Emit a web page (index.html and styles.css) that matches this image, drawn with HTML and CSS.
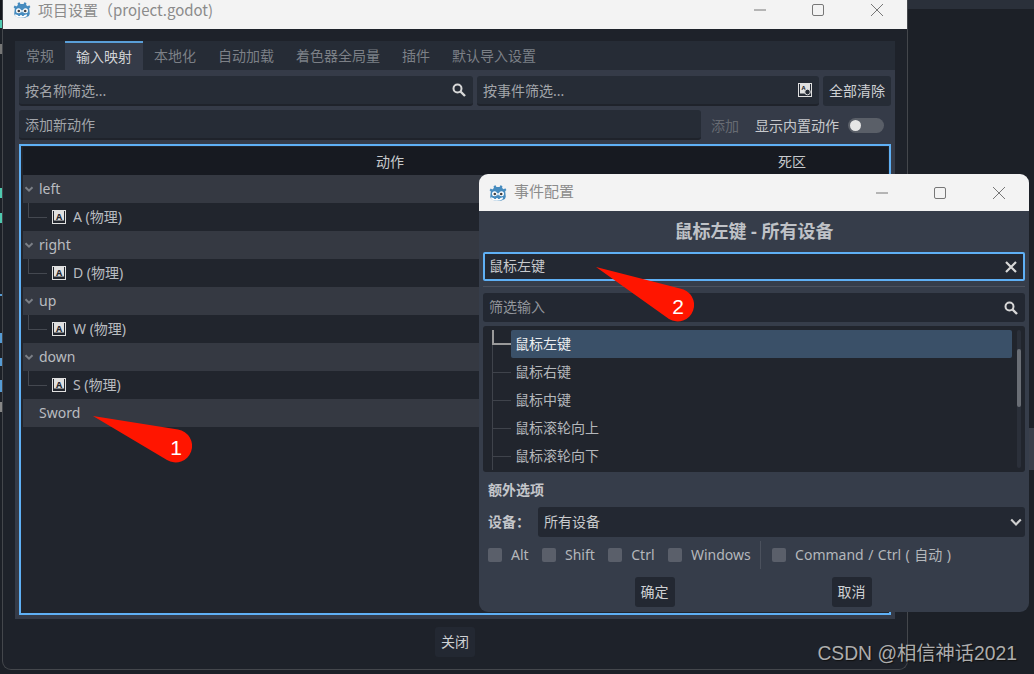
FILE: index.html
```html
<!DOCTYPE html>
<html lang="zh">
<head>
<meta charset="UTF-8">
<title>项目设置</title>
<link rel="stylesheet" href="styles.css">
</head>
<body>
<svg class="defs" width="0" height="0">
	<symbol id="godot" viewBox="0 0 18 18">
		<path fill="#478cbf" d="M6.6 1.2 7.4 3h3.2l.8-1.8 2 .7-.3 2 1.6 1.3 1.6-.9 1.1 1.8-1.2 1.2.6 5.4-.9 2.4q-3 2-6.9 2t-6.9-2L1.200 13l.6-5.400L.6 6.300l1.100-1.800 1.600.9 1.600-1.300-.3-2z"/>
		<path fill="#fff" d="M2 13.300l2.500.7 1 1.100h1.300l.7-1h1l.7 1h1.300l1-1.100 2.500-.7-.3 1.900q-3 1.600-5.700 1.600t-5.700-1.600z"/>
		<circle cx="5.500" cy="9.800" r="2.500" fill="#fff"/>
		<circle cx="12.500" cy="9.800" r="2.500" fill="#fff"/>
		<circle cx="5.800" cy="10" r="1.300" fill="#414042"/>
		<circle cx="12.200" cy="10" r="1.300" fill="#414042"/>
		<rect x="8.300" y="9" width="1.400" height="2.200" fill="#fff"/>
	</symbol>
	<symbol id="key" viewBox="0 0 14 14">
		<rect x=".5" y=".5" width="13" height="13" fill="none" stroke="#e0e0e0"/>
		<rect x="2" y="1" width="10" height="9.500" fill="#e0e0e0"/>
	</symbol>
	<symbol id="search" viewBox="0 0 14 14">
		<circle cx="5.500" cy="5.500" r="4" fill="none" stroke="#d8d8d8" stroke-width="2"/>
		<path d="M8.500 8.500 13 13" stroke="#d8d8d8" stroke-width="2.400"/>
	</symbol>
	<symbol id="min" viewBox="0 0 14 14"><path d="M1 7h12" stroke="#777" fill="none"/></symbol>
	<symbol id="max" viewBox="0 0 14 14"><rect x="1.500" y="1.500" width="11" height="11" rx="1.500" stroke="#777" fill="none"/></symbol>
	<symbol id="close" viewBox="0 0 14 14"><path d="M1 1l12 12M13 1 1 13" stroke="#777" fill="none"/></symbol>
	<symbol id="chev" viewBox="0 0 10 10"><path d="M1.500 3.200 5 6.700l3.500-3.500" stroke="#7b7f86" stroke-width="2" fill="none"/></symbol>
</svg>

<div class="desktop">
	<div class="edge"></div>
	<div class="topbar"></div>
	<div class="sideblock"></div>

	<!-- 项目设置 -->
	<div class="win main-win">
		<div class="titlebar main-title">
			<svg class="logo"><use href="#godot"/></svg>
			<span class="title-text">项目设置（project.godot)</span>
			<div class="ctrls">
				<div class="ctrl"><svg><use href="#min"/></svg></div>
				<div class="ctrl"><svg><use href="#max"/></svg></div>
				<div class="ctrl"><svg><use href="#close"/></svg></div>
			</div>
		</div>
		<div class="main-body">
			<div class="panel">
				<div class="tabs">
					<div class="tab">常规</div>
					<div class="tab on">输入映射</div>
					<div class="tab">本地化</div>
					<div class="tab">自动加载</div>
					<div class="tab">着色器全局量</div>
					<div class="tab">插件</div>
					<div class="tab">默认导入设置</div>
				</div>
				<div class="page">
					<div class="line">
						<div class="ipt w-name"><span>按名称筛选...</span><svg class="ico"><use href="#search"/></svg></div>
						<div class="ipt w-event">
							<span>按事件筛选...</span>
							<svg class="ico" viewBox="0 0 14 14">
								<use href="#key"/>
								<text x="5.500" y="6.500" class="key-s">A</text>
								<circle cx="9.500" cy="9" r="2.800" fill="#262c36" stroke="#e0e0e0"/>
							</svg>
						</div>
						<div class="btn">全部清除</div>
					</div>
					<div class="line">
						<div class="ipt w-add"><span>添加新动作</span></div>
						<div class="add-txt">添加</div>
						<div class="builtin">显示内置动作</div>
						<div class="toggle"><i></i></div>
					</div>
					<div class="tree">
						<div class="tree-head"><span>动作</span><span>死区</span><span></span></div>
						<div class="row act"><svg class="chev"><use href="#chev"/></svg><span class="txt">left</span></div>
						<div class="row sub"><div class="branch"></div><svg class="key" viewBox="0 0 14 14"><use href="#key"/><text x="7" y="9.500" class="key-a">A</text></svg><span class="txt">A (物理)</span></div>
						<div class="row act"><svg class="chev"><use href="#chev"/></svg><span class="txt">right</span></div>
						<div class="row sub"><div class="branch"></div><svg class="key" viewBox="0 0 14 14"><use href="#key"/><text x="7" y="9.500" class="key-a">A</text></svg><span class="txt">D (物理)</span></div>
						<div class="row act"><svg class="chev"><use href="#chev"/></svg><span class="txt">up</span></div>
						<div class="row sub"><div class="branch"></div><svg class="key" viewBox="0 0 14 14"><use href="#key"/><text x="7" y="9.500" class="key-a">A</text></svg><span class="txt">W (物理)</span></div>
						<div class="row act"><svg class="chev"><use href="#chev"/></svg><span class="txt">down</span></div>
						<div class="row sub"><div class="branch"></div><svg class="key" viewBox="0 0 14 14"><use href="#key"/><text x="7" y="9.500" class="key-a">A</text></svg><span class="txt">S (物理)</span></div>
						<div class="row act plain"><span class="txt">Sword</span></div>
					</div>
				</div>
			</div>
			<div class="foot"><div class="btn dark">关闭</div></div>
		</div>
	</div>

	<!-- 事件配置 -->
	<div class="win dialog">
		<div class="titlebar">
			<svg class="logo"><use href="#godot"/></svg>
			<span class="title-text">事件配置</span>
			<div class="ctrls">
				<div class="ctrl"><svg><use href="#min"/></svg></div>
				<div class="ctrl"><svg><use href="#max"/></svg></div>
				<div class="ctrl"><svg><use href="#close"/></svg></div>
			</div>
		</div>
		<div class="dlg-body">
			<div class="dlg-head">鼠标左键 - 所有设备</div>
			<div class="ipt focus">
				<span>鼠标左键</span>
				<svg class="ico" viewBox="0 0 14 14"><path d="M2 2l10 10M12 2 2 12" stroke="#d8d8d8" stroke-width="2.200"/></svg>
			</div>
			<div class="sep"></div>
			<div class="ipt filter"><span>筛选输入</span><svg class="ico"><use href="#search"/></svg></div>
			<div class="list">
				<div class="list-rows">
					<div class="item sel"><div class="branch"></div><div class="item-txt">鼠标左键</div></div>
					<div class="item"><div class="branch"></div><div class="item-txt">鼠标右键</div></div>
					<div class="item"><div class="branch"></div><div class="item-txt">鼠标中键</div></div>
					<div class="item"><div class="branch"></div><div class="item-txt">鼠标滚轮向上</div></div>
					<div class="item"><div class="branch"></div><div class="item-txt">鼠标滚轮向下</div></div>
				</div>
				<div class="scroll"><i></i></div>
			</div>
			<div class="extra">额外选项</div>
			<div class="device">
				<b>设备：</b>
				<div class="select"><span>所有设备</span><svg class="sel-arrow" viewBox="0 0 10 10"><path d="M1 3l4 4 4-4" stroke="#d0d0d0" stroke-width="1.800" fill="none"/></svg></div>
			</div>
			<div class="checks">
				<i class="box"></i><span class="lab">Alt</span>
				<i class="box"></i><span class="lab">Shift</span>
				<i class="box"></i><span class="lab">Ctrl</span>
				<i class="box"></i><span class="lab">Windows</span>
				<div class="vsep"></div>
				<i class="box"></i><span class="lab long">Command / Ctrl ( 自动 )</span>
			</div>
			<div class="dlg-btns">
				<div class="btn dark">确定</div>
				<div class="btn dark">取消</div>
			</div>
		</div>
	</div>

	<!-- 标注 -->
	<svg class="callouts" width="1034" height="674" viewBox="0 0 1034 674">
		<path fill="#ff1500" d="M93 416 178 429.600A16.500 16.500 0 1 1 167 460Z"/>
		<text x="176" y="455" class="num">1</text>
		<path fill="#ff1500" d="M596 267 680 288.600A16.500 16.500 0 1 1 669 319Z"/>
		<text x="678" y="314" class="num">2</text>
	</svg>

	<div class="mark">CSDN @相信神话2021</div>
</div>
</body>
</html>
```

FILE: styles.css
```css
*{margin: 0;padding: 0;box-sizing: border-box;}
html, body{width: 100%;height: 100%;overflow: hidden;}
body{background: #1c2027;color: #c8cacd;font: 14px "Noto Sans", "Noto Sans CJK SC", sans-serif;}
i{display: block;font-style: normal;}
.defs{position: absolute;}

/* desktop behind the windows */
.desktop{position: relative;width: 1034px;height: 674px;overflow: hidden;}
.edge{position: absolute;left: 0;top: 0;width: 2px;height: 674px;background: linear-gradient(#14171c 0, #14171c 20px, #4fc9b0 20px, #4fc9b0 28px, transparent 28px, transparent 44px, #777 44px, #777 54px, transparent 54px, transparent 188px, #4fc9b0 188px, #4fc9b0 198px, transparent 198px, transparent 213px, #4fc9b0 213px, #4fc9b0 223px, transparent 223px, transparent 294px, #569cd6 294px, #569cd6 296px, transparent 296px, transparent 333px, #569cd6 333px, #569cd6 343px, transparent 343px, transparent 358px, #569cd6 358px, #569cd6 366px, transparent 366px, transparent 380px, #569cd6 380px, #569cd6 392px, transparent 392px, transparent 402px, #888 402px, #888 412px, transparent 412px);}
.topbar{position: absolute;left: 908px;top: 0;right: 0;height: 9px;background: #2a303a;}
.sideblock{position: absolute;left: 1029px;top: 428px;right: 0;height: 42px;background: #3a3f4a;}

.win{position: absolute;display: flex;flex-direction: column;}
.main-win{left: 2px;top: 0;width: 906px;height: 670px;background: #1e222a;border: 1px solid #44474c;border-top: 0;border-radius: 0 0 9px 9px;overflow: hidden;}
.dialog{left: 479px;top: 174px;width: 550px;height: 438px;background: #363d4a;border-radius: 9px;overflow: hidden;}

.titlebar{display: flex;align-items: center;flex: none;height: 37px;padding-left: 10px;background: #f3f3f3;color: #8b8b8b;font: 15px "Noto Sans CJK SC", sans-serif;}
.main-title{height: 29px;padding-bottom: 9px;}
.logo{width: 18px;height: 18px;margin-right: 7px;flex: none;}
.title-text{margin-top: -4px;}
.main-title .title-text{margin-top: -2px;}
.ctrls{display: flex;margin-left: auto;padding-right: 1px;}
.ctrl{display: flex;justify-content: center;width: 58.5px;}
.ctrl svg{width: 14px;height: 14px;}

.main-body{flex: 1;padding: 12px 12px 0;}
.panel{height: 578px;display: flex;flex-direction: column;background: #353b48;}
.tabs{display: flex;height: 29px;flex: none;background: #262c36;color: #7c8087;}
.tab{padding: 0 11px;line-height: 29px;}
.tab.on{background: #353b48;border-top: 2px solid #5a9fd8;line-height: 27px;color: #d0d2d5;}

.page{flex: 1;display: flex;flex-direction: column;gap: 4px;padding: 6px 4px 4px;}
.line{display: flex;align-items: center;gap: 4px;height: 30px;flex: none;}

.ipt{display: flex;align-items: center;justify-content: space-between;height: 30px;padding: 0 7px 0 6px;background: #262c36;border-bottom: 2px solid #1f232b;border-radius: 3px;color: #a2a5aa;}
.w-name{width: 454px;}
.w-event{width: 342px;}
.w-add{width: 682px;}
.ico{width: 14px;height: 14px;flex: none;}
.btn{height: 30px;padding: 0 6px;line-height: 30px;background: #262c36;border-radius: 3px;color: #cfd1d4;}
.btn.dark{background: #232832;}
.add-txt{margin-left: 6px;color: #676b73;}
.builtin{margin-left: 12px;}
.toggle{width: 36px;height: 15px;margin-left: 5px;padding: 2px 0 0 2px;background: #5a5f68;border-radius: 8px;}
.toggle i{width: 11px;height: 11px;background: #e6e6e6;border-radius: 50%;}

.tree{flex: 1;padding: 1px 1px 0 2px;background: #21252d;border: 2px solid #5fb0f5;}
.tree-head{display: grid;grid-template-columns: 734px 70px 1fr;height: 28px;line-height: 30px;text-align: center;background: #171a21;}
.row{display: flex;align-items: center;height: 28px;color: #b9bcc0;}
.txt{margin-top: -2px;}
.act{padding-left: 1px;background: #353942;}
.plain{padding-left: 16px;}
.chev{width: 10px;height: 10px;margin-right: 5px;flex: none;}
.sub{padding-left: 5px;}
.sub .branch{width: 19px;height: 28px;margin-right: 5px;background: linear-gradient(#444850, #444850) left top / 1px 50% no-repeat, linear-gradient(#444850, #444850) left center / 100% 1px no-repeat;}
.key{width: 14px;height: 14px;margin-right: 7px;flex: none;}
.key-a{font: bold 9px "Noto Sans", sans-serif;text-anchor: middle;fill: #22252c;}
.key-s{font: bold 6px "Noto Sans", sans-serif;text-anchor: middle;fill: #22252c;}
.foot{display: flex;justify-content: center;padding-top: 8px;}

.dlg-body{flex: 1;padding: 0 4px;}
.dlg-head{height: 41px;line-height: 41px;text-align: center;font-weight: bold;font-size: 18px;color: #bfc2c7;}
.ipt.focus{height: 29px;padding: 0 5px 0 4px;background: #232832;border: 2px solid #5fb0f5;border-radius: 2px;color: #c8cacd;}
.ipt.focus span, .ipt.filter span{margin-top: -4px;}
.sep{height: 1px;margin: 5px 0 6px;background: #4b515d;}
.ipt.filter{height: 29px;background: #232832;border: 0;color: #92959b;}
.list{display: flex;height: 146px;margin-top: 4px;padding: 4px 4px 0 0;background: #21252d;border-radius: 3px;overflow: hidden;}
.list-rows{flex: 1;padding-left: 9px;}
.item{display: flex;height: 28px;color: #b4b7bb;}
.item .branch{width: 19px;flex: none;background: linear-gradient(#3f434b, #3f434b) left top / 1px 100% no-repeat, linear-gradient(#3f434b, #3f434b) left center / 100% 1px no-repeat;}
.item.sel .branch{background: linear-gradient(#9a9a9a, #9a9a9a) left top / 2px 50% no-repeat, linear-gradient(#9a9a9a, #9a9a9a) left center / 100% 2px no-repeat, linear-gradient(#3f434b, #3f434b) left bottom / 1px 50% no-repeat;}
.item-txt{flex: 1;padding-left: 4px;line-height: 28px;border-radius: 2px;}
.item.sel .item-txt{background: #3a5068;color: #eceef0;}
.scroll{width: 4px;height: 138px;margin-left: 5px;background: #2b303a;border-radius: 2px;padding-top: 19px;}
.scroll i{height: 58px;background: #6a6e75;border-radius: 2px;}

.extra{height: 35px;line-height: 35px;padding-left: 5px;font-weight: bold;font-size: 14px;color: #c4c6ca;}
.device{display: flex;align-items: center;height: 30px;padding-left: 5px;}
.device b{width: 50px;margin-top: -2px;font: bold 14px "Noto Sans CJK TC", sans-serif;color: #c4c6ca;}
.select{flex: 1;display: flex;align-items: center;justify-content: space-between;height: 30px;padding: 0 3px 0 6px;background: #232832;border-radius: 3px;}
.select span{margin-top: -2px;}
.sel-arrow{width: 12px;height: 12px;}
.checks{display: flex;align-items: center;height: 28px;margin-top: 4px;padding-left: 5px;color: #b4b7bb;}
.box{width: 14px;height: 14px;margin-right: 9px;background: #5a5f6a;border-radius: 2px;}
.lab{margin: -2px 13.400px 0 0;}
.lab.long{word-spacing: .8px;}
.vsep{width: 1px;height: 28px;margin: 0 11px 0 -4px;background: #4b515d;}
.dlg-btns{display: flex;justify-content: center;gap: 157px;margin-top: 8px;padding-right: 2px;}

.callouts{position: absolute;left: 0;top: 0;}
.num{font: 21px "Liberation Sans", sans-serif;text-anchor: middle;fill: #fff;}
.mark{position: absolute;right: 17px;top: 638px;color: #adadad;font: 19.300px "Liberation Sans", "Noto Sans CJK SC", sans-serif;text-shadow: 1px 1px 1px #111;}
```
